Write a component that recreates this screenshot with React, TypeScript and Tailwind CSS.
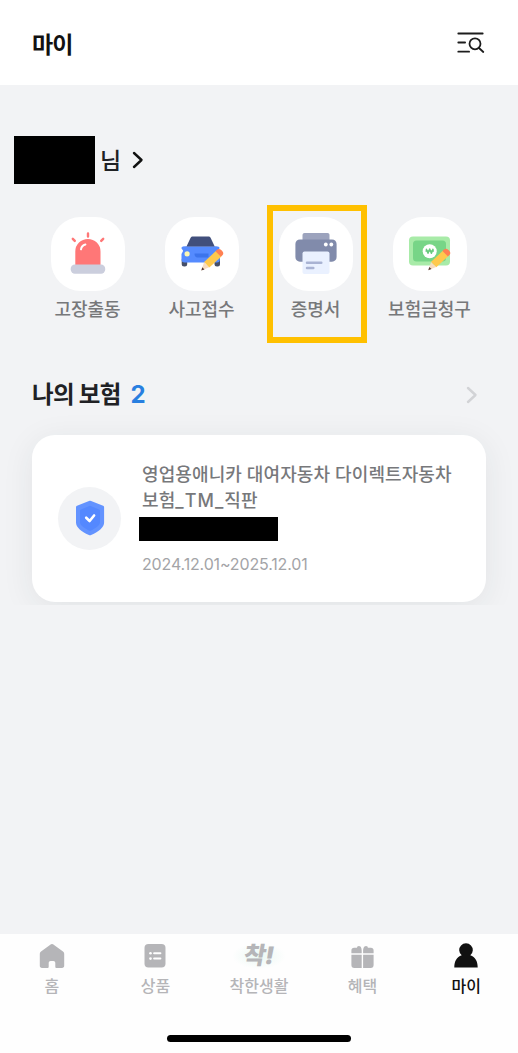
import React from 'react';

interface QuickMenuItem {
  label: string;
  icon: React.ReactNode;
  highlighted?: boolean;
}

interface TabItem {
  label: string;
  icon: React.ReactNode;
  active?: boolean;
}

const SirenIcon = () => (
  <svg width="44" height="44" viewBox="0 2 44 44" fill="none">
    <path d="M22 3.500v3M6.800 8.800l2 2.100M37.200 8.800l-2 2.100" stroke="#ff7777" strokeWidth="2.400" strokeLinecap="round" />
    <path d="M9.300 35V21.500a12.600 12.600 0 0 1 25.200 0V35z" fill="#ff7777" />
    <path d="M15 19.300c.4-2.600 2-4.200 4.400-4.800" stroke="#fff" strokeWidth="2" strokeLinecap="round" />
    <rect x="4.700" y="34.500" width="34.500" height="9.300" rx="4.200" fill="#cbcedd" />
  </svg>
);

const Pencil = () => (
  <g>
    <path d="m21 41 2.800-8.200 5.100 5z" fill="#f8dcc0" />
    <path d="m21 41 1-3.200 2.200 2.100z" fill="#5a3c35" />
    <path d="m23.800 32.600 11.700-11 5.600 5.300L29 38z" fill="#ffc94d" />
    <path d="m35.200 21.700 1.200-1.100a3.200 3.200 0 0 1 4.500 0l1 1a3.200 3.200 0 0 1 0 4.500l-1.300 1.100z" fill="#ff8052" />
  </g>
);

const CarIcon = () => (
  <svg width="44" height="44" viewBox="1.500 3.500 44 44">
    <rect x="3.200" y="29" width="5.500" height="9" rx="2.500" fill="#464f68" />
    <rect x="36" y="29" width="5.500" height="9" rx="2.500" fill="#464f68" />
    <path d="M3 19.500c0-2 4-1.800 6-1.800h26c2 0 6-.2 6 1.800 0 1.400-1.400 1.700-1.400 2.600l1.800 3.400V31c0 2-1 3-3 3H6c-2 0-3-1-3-3v-5.500l1.600-3C4.600 21.300 3 21 3 19.500z" fill="#558bff" />
    <path d="M8 17.900 12 9.500c.6-1.200 1.300-1.600 2.600-1.600h15c1.300 0 2 .4 2.600 1.600l4 8.400z" fill="#414f7c" />
    <circle cx="8.600" cy="25.400" r="2.600" fill="#fbf6b2" />
    <path d="M16 25h14v4H19c-2 0-3-1.500-3-4z" fill="#3c74ec" />
    <g transform="translate(1.800 1)"><Pencil /></g>
  </svg>
);

const PrinterIcon = () => (
  <svg width="44" height="44" viewBox="0 4.500 44 44">
    <path d="M8.500 13V7.400c0-1.200.9-2 2-2h23c1.200 0 2 .8 2 2V13z" fill="#9ca3bd" />
    <path d="M6 12h32c2.800 0 4.600 1.800 4.600 4.600v13c0 2.800-1.800 4.600-4.600 4.600H6c-2.800 0-4.600-1.800-4.600-4.600v-13C1.400 13.800 3.200 12 6 12z" fill="#818bab" />
    <circle cx="31.800" cy="17" r="1.900" fill="#fff" />
    <circle cx="37.300" cy="17" r="1.900" fill="#fff" />
    <path d="M10.500 24h23a2 2 0 0 1 2 2v18.500c0 1.200-.8 2-2 2h-23c-1.200 0-2-.8-2-2V26a2 2 0 0 1 2-2z" fill="#eaf1ff" />
    <path d="M13 35.200h14.300M13 40.400h6.300" stroke="#a9b3d3" strokeWidth="2.500" strokeLinecap="round" />
  </svg>
);

const MoneyIcon = () => (
  <svg width="44" height="44" viewBox="0.500 0.500 44 44">
    <rect x="1.500" y="5" width="41" height="29" rx="4" fill="#a8eba8" />
    <rect x="5.500" y="9" width="33" height="21" rx="3.500" fill="#77d587" />
    <circle cx="22.200" cy="19.700" r="7" fill="#fff" />
    <path d="m18.700 17.300 1.800 4.500 1.700-4.300 1.700 4.300 1.800-4.500M18 19.500h8.400" fill="none" stroke="#68ca7d" strokeWidth="1.500" strokeLinejoin="round" />
    <g transform="translate(-.2 -2.300)"><Pencil /></g>
  </svg>
);

const ShieldIcon = () => (
  <svg width="30" height="36" viewBox="0 0 30 36" className="mb-px">
    <path d="M15 .8a2 2 0 0 1 1.100.2l12 4.700c.7.300 1 .8 1 1.500v15.300c0 4.600-5 8.900-13 12.600a2.500 2.500 0 0 1-2.200 0C6 31.400 1 27.100 1 22.500V7.200c0-.7.300-1.200 1-1.500l12-4.700a2 2 0 0 1 1-.2z" fill="#6393ff" />
    <path d="m15 5.800 9 3.700c.7.300 1 .7 1 1.400v11.400c0 3-4 5.800-10 8.800-6-3-10-5.800-10-8.800V10.900c0-.7.300-1.100 1-1.400z" fill="#5488ff" />
    <path d="m11.200 17.700 3.400 3.300 4.500-5.500" fill="none" stroke="#fff" strokeWidth="2.600" strokeLinecap="round" strokeLinejoin="round" />
  </svg>
);

const SearchMenuIcon = () => (
  <svg width="28" height="22" viewBox="0 0 28 22" fill="none" stroke="#1c1c1c" strokeWidth="1.800" strokeLinecap="round">
    <path d="M1.300 1.500h24.400M1.300 10.500h6.800M1.300 19.700h10.800M22 16l4.300 4" />
    <circle cx="18" cy="11.800" r="5.500" />
  </svg>
);

const HomeIcon = () => (
  <svg width="26" height="26" viewBox="0 0 26 26" fill="#b5b5b8">
    <path d="M12 1.200a2 2 0 0 1 2 0L24 8.400c.8.600 1.200 1.300 1.200 2.300v12.100c0 1.300-.8 2.200-2.200 2.200h-5.400c-.8 0-1.300-.5-1.300-1.300V20c0-1.100-.8-1.900-1.900-1.900h-2.800c-1.100 0-1.900.8-1.900 1.900v3.700c0 .8-.5 1.300-1.300 1.300H3C1.600 25 .8 24.100.8 22.800V10.700c0-1 .4-1.700 1.200-2.300z" />
  </svg>
);

const ProductIcon = () => (
  <svg width="26" height="26" viewBox="0 0 26 26">
    <rect x="2.500" y="1" width="21" height="23.500" rx="4" fill="#b5b5b8" />
    <circle cx="8.500" cy="10.300" r="1.300" fill="#fff" />
    <circle cx="8.500" cy="15.600" r="1.300" fill="#fff" />
    <path d="M12.100 10.300h6.300M12.100 15.600h6.300" stroke="#fff" strokeWidth="2" strokeLinecap="round" />
  </svg>
);

const GiftIcon = () => (
  <svg width="26" height="26" viewBox="0.500 0 26 26" fill="#b5b5b8">
    <path d="M12.200 10.200H1.900V7.500c0-1.800 1-2.700 2.700-2.700h3c-.5-1.800 2.300-2.500 3.300-1.200.8.900 1.300 2.500 1.300 4.200zM13.600 10.200h10.500V7.500c0-1.800-1-2.700-2.700-2.700h-3.100c.5-1.800-2.300-2.500-3.300-1.200-.9.900-1.400 2.500-1.400 4.200zM1.900 11.800h10.300V25H4.800c-1.900 0-2.900-1-2.900-2.900zM13.600 11.800h10.500v10.300c0 1.900-1 2.900-2.900 2.900h-7.600z" />
  </svg>
);

const PersonIcon = () => (
  <svg width="26" height="26" viewBox="0 0 26 26" fill="#111">
    <path d="M1.300 24.500c0-6.200 2.400-10.400 7.400-12.200a6.800 6.800 0 1 1 8.600 0c5 1.800 7.400 6 7.400 12.200z" />
  </svg>
);

const GoodLifeIcon = () => (
  <span className="flex h-[26px] -skew-x-10 items-center text-[24px] leading-[26px] font-black tracking-[-1px] text-[#b5b5b8]">
    착!
  </span>
);

const Chevron = ({ className }: { className: string }) => (
  <svg width="12" height="18" viewBox="0 0 12 18" fill="none" stroke="currentColor" strokeWidth="2.400" strokeLinecap="round" strokeLinejoin="round" className={className}>
    <path d="m2 2 7.500 7L2 16" />
  </svg>
);

const quickMenu: QuickMenuItem[] = [
  { label: '고장출동', icon: <SirenIcon /> },
  { label: '사고접수', icon: <CarIcon /> },
  { label: '증명서', icon: <PrinterIcon />, highlighted: true },
  { label: '보험금청구', icon: <MoneyIcon /> },
];

const tabs: TabItem[] = [
  { label: '홈', icon: <HomeIcon /> },
  { label: '상품', icon: <ProductIcon /> },
  { label: '착한생활', icon: <GoodLifeIcon /> },
  { label: '혜택', icon: <GiftIcon /> },
  { label: '마이', icon: <PersonIcon />, active: true },
];

const QuickMenu = () => (
  <div className="mt-[33px] grid grid-cols-4 px-[31px]">
    {quickMenu.map((item) => (
      <button key={item.label} className="relative flex flex-col items-center">
        <span className="flex size-[74px] items-center justify-center rounded-[30px] bg-white">{item.icon}</span>
        <span className="mt-[7px] pr-px text-[18px] leading-6 font-medium whitespace-nowrap text-[#77787a]">{item.label}</span>
        {item.highlighted && (
          <span className="absolute -top-3 left-2 h-[138px] w-[100px] border-6 border-[#ffc000]" />
        )}
      </button>
    ))}
  </div>
);

const InsuranceSection = () => (
  <section className="mt-7 h-[255px] overflow-hidden px-8 pt-[29px]">
    <div className="flex h-8 items-center">
      <h2 className="text-[23.500px] font-bold tracking-[-0.700px] text-[#202124]">나의 보험</h2>
      <span className="ml-2.5 text-[24px] font-bold text-[#287fe0]">2</span>
      <Chevron className="mr-2 ml-auto text-[#d2d3d6]" />
    </div>
    <div className="mt-6 flex h-[167px] rounded-[23px] bg-white pl-[26px] shadow-[0_6px_32px_rgba(40,45,55,0.080)]">
      <div className="mt-[52px] flex size-[63px] shrink-0 items-center justify-center rounded-full bg-[#f2f3f5]">
        <ShieldIcon />
      </div>
      <div className="ml-[18px] pt-[27px]">
        <p className="ml-[3px] text-[18px] leading-[26px] font-medium tracking-[0.100px] whitespace-nowrap text-[#77787b]">
          영업용애니카 대여자동차 다이렉트자동차
          <br />
          보험<span className="tracking-[1px]">_TM_</span>직판
        </p>
        <div className="mt-[3px] h-6 w-[139px] bg-black" />
        <p className="mt-[11px] ml-[3px] text-[16px] leading-6 tracking-[-0.150px] whitespace-nowrap text-[#a3a4a7]">
          2024.12.01~2025.12.01
        </p>
      </div>
    </div>
  </section>
);

const TabBar = () => (
  <nav className="flex h-[119px] flex-col bg-[#fefefe]">
    <div className="grid grid-cols-5 pt-[9px]">
      {tabs.map((tab) => (
        <button
          key={tab.label}
          className={`flex flex-col items-center text-[16px] font-medium ${tab.active ? 'text-[#111]' : 'text-[#b5b5b8]'}`}
        >
          <span className={tab.label === '착한생활' ? 'bg-radial from-[#e9f8f3] to-transparent to-70% px-3' : ''}>
            {tab.icon}
          </span>
          <span className="mt-[5px] leading-6">{tab.label}</span>
        </button>
      ))}
    </div>
    <div className="mx-auto mt-auto mb-[11px] h-[7px] w-[184px] rounded-full bg-black" />
  </nav>
);

export default function App() {
  return (
    <div className="flex h-[1053px] w-[518px] flex-col overflow-hidden bg-[#f2f3f5] font-['Inter','Noto_Sans_CJK_KR',sans-serif]">
      <header className="flex h-[85px] shrink-0 items-center justify-between bg-white pr-[33px] pl-8">
        <h1 className="pt-1.5 text-[23px] font-bold tracking-[-1px] text-[#111]">마이</h1>
        <SearchMenuIcon />
      </header>
      <main className="flex-1">
        <div className="mt-[51px] flex h-12 items-center pl-3.5">
          <div className="h-12 w-[81px] bg-black" />
          <span className="ml-[5px] pt-[3px] text-[23px] font-medium text-[#202124]">님</span>
          <Chevron className="ml-[11px] text-[#111]" />
        </div>
        <QuickMenu />
        <InsuranceSection />
      </main>
      <TabBar />
    </div>
  );
}
